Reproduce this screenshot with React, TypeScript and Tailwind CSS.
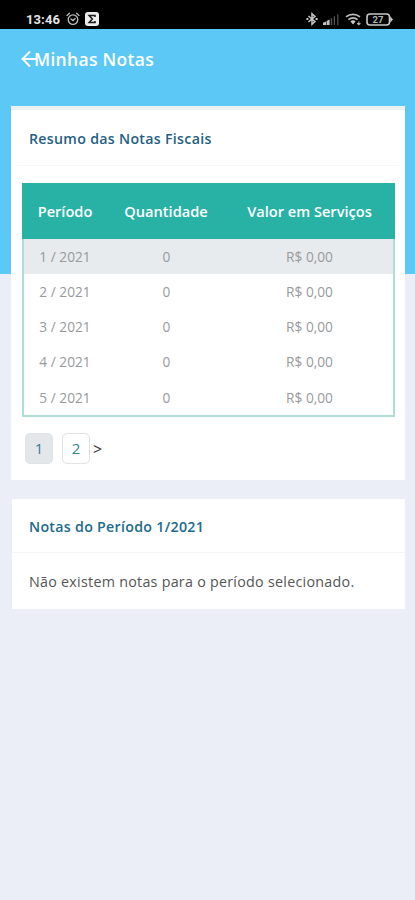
import { useState } from 'react'

type Row = { period: string; amount: number; total: string }

const ROWS: Row[] = [
  { period: '1 / 2021', amount: 0, total: 'R$ 0,00' },
  { period: '2 / 2021', amount: 0, total: 'R$ 0,00' },
  { period: '3 / 2021', amount: 0, total: 'R$ 0,00' },
  { period: '4 / 2021', amount: 0, total: 'R$ 0,00' },
  { period: '5 / 2021', amount: 0, total: 'R$ 0,00' },
]

function StatusBar() {
  return (
    <div className="flex h-[29px] items-center bg-black pt-[9px] pr-[22px] pl-[26px] text-[#e4e4e4]">
      <span className="w-[35px] font-['Roboto'] text-[13px] leading-none font-bold tracking-[0.1px]">13:46</span>
      <svg className="ml-[5px]" width="14" height="14" viewBox="0 0 14 14" fill="none" stroke="#bdbdbd" strokeWidth="1.3" strokeLinecap="round">
        <circle cx="7" cy="7.6" r="4.8" />
        <path d="M1 3.4 3.4 1.2M13 3.4 10.6 1.2M5 7l2 1.6L9.2 6.6" />
      </svg>
      <svg className="ml-[5px]" width="14" height="14" viewBox="0 0 14 14">
        <rect width="14" height="14" rx="3" fill="#ededed" />
        <path d="M10 4.9V3.5H4.2L7.3 7l-3.1 3.5H10V9.1" fill="none" stroke="#1c1c1c" strokeWidth="1.6" />
      </svg>
      <div className="ml-auto flex items-center">
        <svg width="12" height="14" viewBox="0 0 12 14" fill="none" stroke="#c4c4c4" strokeWidth="1.5">
          <path d="M2.4 4 9 9.6 6 12.3V1.7l3 2.7-6.6 5.6" />
          <path d="M.4 7h2M9.6 7h2" strokeWidth="1.8" />
        </svg>
        <svg className="ml-[5px]" width="16" height="13" viewBox="0 0 16 13">
          <path d="M0 12V9.8L3 8.6V12zM3.6 12V8l3-1.6V12z" fill="#c4c4c4" />
          <path d="M7.8 12V5.2h1.4V12zM10.8 12V3.2h1.2V12zM14.2 12V1.2h1.2V12z" fill="#555" />
        </svg>
        <svg className="ml-[6px]" width="17" height="14" viewBox="0 0 17 14" fill="none" stroke="#bcbcbc" strokeWidth="1.7">
          <path d="M1 4.8c4-3.2 10-3.2 14 0M3.4 7.6c2.8-2.2 6.4-2.2 9.2 0" />
          <path d="m5.4 9.2 2.6 3.2 2.6-3.2c-1.6-1.2-3.6-1.2-5.2 0z" fill="#c8c8c8" stroke="none" />
          <path d="M13.8 9.4v3.4M12.2 11.2l1.6 1.6 1.6-1.6" strokeWidth="1.1" />
        </svg>
        <div className="relative ml-[4px] flex h-[13px] w-[27px] items-center justify-center pr-[3px]">
          <svg className="absolute inset-0" width="27" height="13" viewBox="0 0 27 13" fill="none" stroke="#c8c8c8" strokeWidth="1.6">
            <rect x="1" y="1" width="22.5" height="11" rx="3" />
            <path d="M24.2 3.2 27 6.5l-2.8 3.3z" fill="#c8c8c8" stroke="none" />
          </svg>
          <span className="pt-px font-['Roboto'] text-[9.5px] leading-none font-bold text-[#b4b4b4]">27</span>
        </div>
      </div>
    </div>
  )
}

function PageButton({ page, active, onClick }: { page: number; active: boolean; onClick: () => void }) {
  return (
    <button
      onClick={onClick}
      className={`h-[31px] w-[28px] rounded-[5px] border border-[#dfe3e5] text-[15px] leading-none ${
        active ? 'bg-[#e3e7ea] text-[#3b7896]' : 'bg-white text-[#338585]'
      }`}
    >
      {page}
    </button>
  )
}

export default function App() {
  const [page, setPage] = useState(1)

  return (
    <div className="min-h-[900px] bg-[#ebeef6] font-['Open_Sans',sans-serif]">
      <StatusBar />

      <main className="bg-[linear-gradient(#5bc8f6_245px,#ebeef6_245px)]">
        <header className="flex h-[77px] items-start pt-[19px] pl-[21px] text-white">
          <svg className="mt-[2px]" width="16" height="18" viewBox="0 0 16 18" fill="none" stroke="currentColor" strokeWidth="2">
            <path d="M9 1.5 1.6 9 9 16.5M1.6 9H16" />
          </svg>
          <h1 className="-ml-[3px] text-[17.5px] leading-[22px] font-semibold tracking-[0.3px]">Minhas Notas</h1>
        </header>

        <section className="mr-[10px] ml-[11px] h-[374px] border-t-4 border-[#edf1f3] bg-white">
          <h2 className="mx-[6px] h-[56px] border-b border-[#f5f6f8] pt-[17px] pl-3 text-[14.2px] leading-[24px] font-semibold tracking-[0.3px] text-[#245f83]">
            Resumo das Notas Fiscais
          </h2>

          <table className="mt-[17px] ml-[11px] h-[234px] w-[373px] table-fixed border-separate border-spacing-0 border-2 border-t-0 border-[#b0ded6] text-center">
            <colgroup>
              <col className="w-[82px]" />
              <col className="w-[120px]" />
              <col />
            </colgroup>
            <thead>
              <tr className="h-[56px] bg-[#27b2a5] text-[14.6px] text-white shadow-[2px_0_0_#27b2a5,-2px_0_0_#27b2a5]">
                <th className="p-0 pt-px font-semibold">Período</th>
                <th className="p-0 pt-px font-semibold">Quantidade</th>
                <th className="p-0 pt-px font-semibold">Valor em Serviços</th>
              </tr>
            </thead>
            <tbody>
              {ROWS.map((row, i) => (
                <tr key={row.period} className={`text-[13.7px] text-[#989a9c] ${i === 0 ? 'bg-[#e7ebed]' : ''}`}>
                  <td className="p-0 pt-px">{row.period}</td>
                  <td className="p-0 pt-px pl-px">{row.amount}</td>
                  <td className="p-0 pt-px">{row.total}</td>
                </tr>
              ))}
            </tbody>
          </table>

          <div className="mt-[16px] ml-[14px] flex items-center">
            <PageButton page={1} active={page === 1} onClick={() => setPage(1)} />
            <span className="w-[9px]" />
            <PageButton page={2} active={page === 2} onClick={() => setPage(2)} />
            <button onClick={() => setPage(2)} className="ml-[3px] text-[16px] leading-none font-medium text-[#333]">&gt;</button>
          </div>
        </section>
      </main>

      <section className="mt-[19px] mr-[10px] ml-[12px] h-[110px] bg-white">
        <h2 className="h-[54px] border-b border-[#f3f5f8] pt-[16px] pl-[17px] text-[14.2px] leading-[24px] font-semibold tracking-[0.3px] text-[#206a8e]">
          Notas do Período 1/2021
        </h2>
        <p className="pt-[16px] pl-[17px] text-[14.3px] leading-[25px] tracking-[0.26px] text-[#555]">
          Não existem notas para o período selecionado.
        </p>
      </section>
    </div>
  )
}
